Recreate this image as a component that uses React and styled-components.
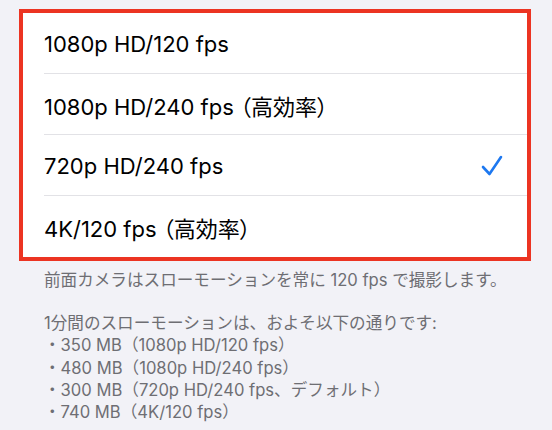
import styled, { createGlobalStyle } from "styled-components";

const GlobalStyle = createGlobalStyle`
  html, body {
    margin: 0;
    padding: 0;
    background: #f2f2f7;
  }
  body {
    font-family: Inter, "Noto Sans CJK JP", sans-serif;
  }
`;

const Page = styled.div`
  width: 552px;
  height: 430px;
  padding: 9px 21px 0 19px;
  box-sizing: border-box;
  overflow: hidden;
`;

const Card = styled.div`
  background: #fff;
  border: 4px solid #ec3422;
  display: flex;
  flex-direction: column;
`;

const Row = styled.div`
  height: 61px;
  display: flex;
  align-items: center;
  justify-content: space-between;
  padding: 0 24px 0 21px;
  position: relative;
  font-size: 22px;
  font-feature-settings: "palt";
  color: #000;

  &:not(:last-child)::after {
    content: "";
    position: absolute;
    left: 21px;
    right: 0;
    bottom: 0;
    height: 1px;
    background: #e2e2e6;
  }
`;

const Footer = styled.div`
  padding: 8px 0 0 25px;
  font-size: 16.6px;
  line-height: 22.2px;
  color: #6e6e73;
`;

const Para = styled.p`
  margin: 0 0 21px;
`;

const Check = () => (
  <svg width="22" height="21" viewBox="0 0 22 21">
    <path
      d="M2 12 L8.5 19 L20 2"
      fill="none"
      stroke="#1d78f0"
      strokeWidth="2.6"
      strokeLinecap="round"
      strokeLinejoin="round"
    />
  </svg>
);

const options = [
  { label: "1080p HD/120 fps" },
  { label: "1080p HD/240 fps （高効率）" },
  { label: "720p HD/240 fps", selected: true },
  { label: "4K/120 fps （高効率）" },
];

export default function App() {
  return (
    <>
      <GlobalStyle />
      <Page>
        <Card>
          {options.map((o) => (
            <Row key={o.label}>
              <span>{o.label}</span>
              {o.selected && <Check />}
            </Row>
          ))}
        </Card>
        <Footer>
          <Para>前面カメラはスローモーションを常に 120 fps で撮影します。</Para>
          <Para>
            1分間のスローモーションは、およそ以下の通りです:
            <br />・350 MB（1080p HD/120 fps）
            <br />・480 MB（1080p HD/240 fps）
            <br />・300 MB（720p HD/240 fps、デフォルト）
            <br />・740 MB（4K/120 fps）
          </Para>
        </Footer>
      </Page>
    </>
  );
}
